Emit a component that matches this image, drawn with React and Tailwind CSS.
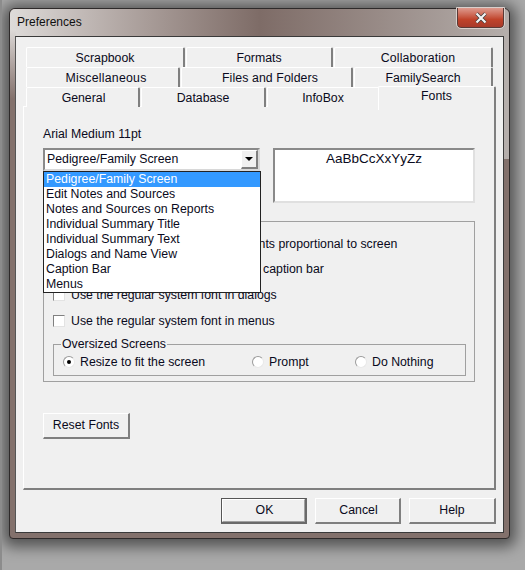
const F = { fontFamily: '"Liberation Sans", Arial, sans-serif' };

function Tab({ w, className = "", children }) {
  return (
    <div className={`h-5 pt-px flex items-center justify-center bg-[#f0f0f0] border-t border-l border-white border-r-2 border-r-[#7f7f7f] rounded-t-[2px] mr-px ${w} ${className}`}>
      {children}
    </div>
  );
}

function Check({ children, className = "" }) {
  return (
    <div className={`flex items-center gap-[6px] h-4 whitespace-nowrap ${className}`}>
      <span className="w-3 h-3 shrink-0 bg-white border-t border-l border-[#808080] border-r border-b border-r-[#e3e3e3] border-b-[#e3e3e3]" />
      <span>{children}</span>
    </div>
  );
}

function Radio({ on, children, className = "" }) {
  return (
    <div className={`flex items-center gap-[5px] ${className}`}>
      <span className="w-3 h-3 rounded-full bg-white border border-[#9a9a9a] border-r-[#e8e8e8] border-b-[#e8e8e8] flex items-center justify-center">
        {on && <span className="w-1 h-1 rounded-full bg-black" />}
      </span>
      <span>{children}</span>
    </div>
  );
}

function Btn({ w, className = "", children }) {
  return (
    <div className={`${w} h-[26px] flex items-center justify-center bg-[#f0f0f0] border-t border-l border-white border-r-2 border-b-2 border-r-[#7f7f7f] border-b-[#7f7f7f] ${className}`}>
      {children}
    </div>
  );
}

function DefaultBtn({ w, children }) {
  return (
    <div className={`${w} h-[26px] border border-[#555555] border-r-2 border-b-2 border-r-[#6a6a6a] border-b-[#6a6a6a]`}>
      <div className="h-full pl-[2px] flex items-center justify-center bg-[#f0f0f0] border-t border-l border-white border-r border-b border-r-[#a0a0a0] border-b-[#a0a0a0]">
        {children}
      </div>
    </div>
  );
}

const items = [
  "Pedigree/Family Screen",
  "Edit Notes and Sources",
  "Notes and Sources on Reports",
  "Individual Summary Title",
  "Individual Summary Text",
  "Dialogs and Name View",
  "Caption Bar",
  "Menus",
];

export default function App() {
  return (
    <div style={F} className="relative w-[525px] h-[570px] overflow-hidden bg-[#a9a9a9] border-l-2 border-l-[#8c8c8c] pt-2 pl-[7px] text-[12.3px] leading-[15px] text-[#0a0a20]">
      <div className="relative w-[501px] h-[531px] rounded-t-[6px] rounded-b-[4px] border border-[#2e2a2a] bg-[#83716c] shadow-[0_2px_14px_6px_rgba(0,0,0,0.5)] flex flex-col">
        <div className="absolute left-0 top-[20px] w-[6px] h-[70px] bg-gradient-to-b from-[#dedbd9] to-[#83716c]" />
        <div className="absolute right-0 top-[20px] w-[6px] h-[130px] bg-[#b5aeab]" />
        <div className="h-[27px] shrink-0 rounded-t-[5px] pl-[7px] pt-[6px] bg-gradient-to-r from-[#dedbd9] via-[#7e6c67] via-50% to-[#b5aeab]">
          <span className="text-[12px] text-[#101010]">Preferences</span>
        </div>
        <div className="absolute right-[5px] top-[-1px] w-[47px] h-[20px] rounded-b-[4px] border border-[#5a3a36] border-t-0 outline outline-1 outline-[#d8d0cc] bg-gradient-to-b from-[#dd9a8e] via-[#c0432a] via-60% to-[#a83a2a] flex items-center justify-center">
          <svg width="14" height="12" viewBox="0 0 14 12">
            <path d="M2.5 1.5 L7 6 L11.5 1.5 M2.5 10.5 L7 6 L11.5 10.5" stroke="#3e3e3e" strokeWidth="3.6" fill="none" />
            <path d="M2.5 1.5 L7 6 L11.5 1.5 M2.5 10.5 L7 6 L11.5 10.5" stroke="#f4f4f4" strokeWidth="2.2" fill="none" />
          </svg>
        </div>
        <div className="relative flex-1 mx-[5px] mb-[5px] bg-[#f0f0f0] border border-[#3a3a3a] border-l-[#555555] pl-[7px] pr-2 pt-[10px] flex flex-col">
          <div className="pl-[3px] relative">
            <div className="flex">
              <Tab w="w-[159px]">Scrapbook</Tab>
              <Tab w="w-[147px]">Formats</Tab>
              <Tab w="w-[159px]" className="pl-[10px] tracking-[0.15px]">Collaboration</Tab>
            </div>
            <div className="flex">
              <Tab w="w-[154px]" className="pl-[7px] tracking-[0.25px]">Miscellaneous</Tab>
              <Tab w="w-[172px]" className="pl-[7px] tracking-[0.1px]">Files and Folders</Tab>
              <Tab w="w-[139px]">FamilySearch</Tab>
            </div>
            <div className="flex">
              <Tab w="w-[114px]" className="pl-[2px]">General</Tab>
              <Tab w="w-[125px]">Database</Tab>
              <div className="w-[111px] h-5 pt-px flex items-center justify-center bg-[#f0f0f0] border-t border-l border-white">InfoBox</div>
            </div>
            <div className="absolute left-[355px] top-[39px] z-10 w-[118px] h-[24px] pt-[2px] text-center bg-[#f0f0f0] border-t border-l border-white border-r-2 border-r-[#7f7f7f] rounded-t-[2px]">Fonts</div>
          </div>
          <div className="w-[473px] h-[384px] -mt-px bg-[#f0f0f0] border-t border-l border-white border-r-2 border-b-2 border-r-[#7f7f7f] border-b-[#7f7f7f] pl-[19px] pr-[19px] pt-5 flex flex-col">
            <div className="h-[15px]">Arial Medium 11pt</div>
            <div className="flex justify-between mt-[6px] h-[55px]">
              <div className="relative w-[217px] h-[23px] bg-white border-2 border-[#8a8a8a] border-r-[#d8d8d8] border-b-[#d8d8d8] flex items-center pl-[2px]">
                <span className="flex-1">Pedigree/Family Screen</span>
                <span className="w-[17px] h-[19px] bg-[#f0f0f0] border-t border-l border-white border-r-2 border-b-2 border-r-[#7f7f7f] border-b-[#7f7f7f] flex items-center justify-center">
                  <svg width="8" height="4" viewBox="0 0 8 4"><path d="M0 0H8L4 4Z" fill="#000" /></svg>
                </span>
                <div className="absolute z-20 left-[-2px] top-[21px] w-[218px] h-[122px] bg-white border border-[#222222]">
                  {items.map((t, i) => (
                    <div key={t} className={`h-[15px] pl-[2px] whitespace-nowrap ${i === 0 ? "bg-[#3399ff] text-white" : ""}`}>{t}</div>
                  ))}
                </div>
              </div>
              <div className="w-[202px] h-[55px] bg-white border-2 border-[#8a8a8a] border-r-[#e0e0e0] border-b-[#e0e0e0] text-center text-[13.5px] pt-[1px]">AaBbCcXxYyZz</div>
            </div>
            <div className="mt-[18px] h-[161px] border border-[#a0a0a0] pl-[9px] pr-[8px] pt-[14px] flex flex-col">
              <Check>Keep the Pedigree and Family's fonts proportional to screen</Check>
              <Check className="mt-[9px]">Use the regular system font for the caption bar</Check>
              <Check className="mt-[10px]">Use the regular system font in dialogs</Check>
              <Check className="mt-[10px]">Use the regular system font in menus</Check>
              <div className="relative mt-[15px] h-[32px] border border-[#a0a0a0] flex items-center pl-[9px] pt-[4px]">
                <span className="absolute left-[7px] top-[-8px] px-px bg-[#f0f0f0]">Oversized Screens</span>
                <Radio on className="w-[189px]">Resize to fit the screen</Radio>
                <Radio className="w-[103px]">Prompt</Radio>
                <Radio>Do Nothing</Radio>
              </div>
            </div>
            <div className="mt-[31px]">
              <Btn w="w-[87px]">Reset Fonts</Btn>
            </div>
          </div>
          <div className="flex justify-end gap-2 mt-[8px] w-[473px]">
            <DefaultBtn w="w-[86px]">OK</DefaultBtn>
            <Btn w="w-[86px]" className="pl-[2px]">Cancel</Btn>
            <Btn w="w-[87px]">Help</Btn>
          </div>
        </div>
      </div>
    </div>
  );
}
